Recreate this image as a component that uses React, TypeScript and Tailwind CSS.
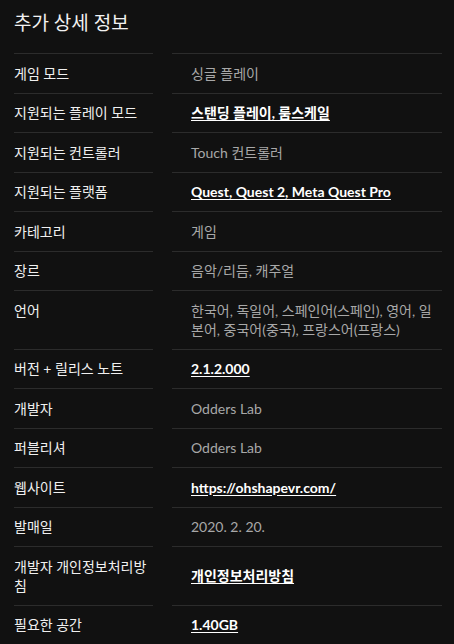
import React from 'react';

type Row = { label: string; value: string; link?: boolean };

const rows: Row[] = [
  { label: '게임 모드', value: '싱글 플레이' },
  { label: '지원되는 플레이 모드', value: '스탠딩 플레이, 룸스케일', link: true },
  { label: '지원되는 컨트롤러', value: 'Touch 컨트롤러' },
  { label: '지원되는 플랫폼', value: 'Quest, Quest 2, Meta Quest Pro', link: true },
  { label: '카테고리', value: '게임' },
  { label: '장르', value: '음악/리듬, 캐주얼' },
  { label: '언어', value: '한국어, 독일어, 스페인어(스페인), 영어, 일본어, 중국어(중국), 프랑스어(프랑스)' },
  { label: '버전 + 릴리스 노트', value: '2.1.2.000', link: true },
  { label: '개발자', value: 'Odders Lab' },
  { label: '퍼블리셔', value: 'Odders Lab' },
  { label: '웹사이트', value: 'https://ohshapevr.com/', link: true },
  { label: '발매일', value: '2020. 2. 20.' },
  { label: '개발자 개인정보처리방침', value: '개인정보처리방침', link: true },
  { label: '필요한 공간', value: '1.40GB', link: true },
];

const App: React.FC = () => {
  return (
    <div
      className="min-h-screen w-[454px] bg-[#111111] pl-[14px] pr-[12px] pt-[8px]"
      style={{ fontFamily: 'Lato, "Noto Sans CJK KR", sans-serif' }}
    >
      <h2 className="text-[19px] leading-[30px] text-[#f2f2f2] mb-[15px]">추가 상세 정보</h2>
      <div className="grid grid-cols-[139px_270px] gap-x-[19px]">
        {rows.map((row, i) => (
          <React.Fragment key={i}>
            <div
              className={`border-t border-[#2c2c2c] py-[9.75px] pr-[4px] text-[14px] leading-[19px] text-[#f0f0f0] ${
                i === rows.length - 1 ? 'border-b' : ''
              }`}
            >
              {row.label}
            </div>
            <div
              className={`flex items-center border-t border-[#2c2c2c] py-[9.75px] pl-[19px] text-[14px] leading-[19px] ${
                i === rows.length - 1 ? 'border-b' : ''
              }`}
            >
              {row.link ? (
                <a className="font-bold text-white underline underline-offset-2">{row.value}</a>
              ) : (
                <span className="text-[#a8a8a8]">{row.value}</span>
              )}
            </div>
          </React.Fragment>
        ))}
      </div>
    </div>
  );
};

export default App;
